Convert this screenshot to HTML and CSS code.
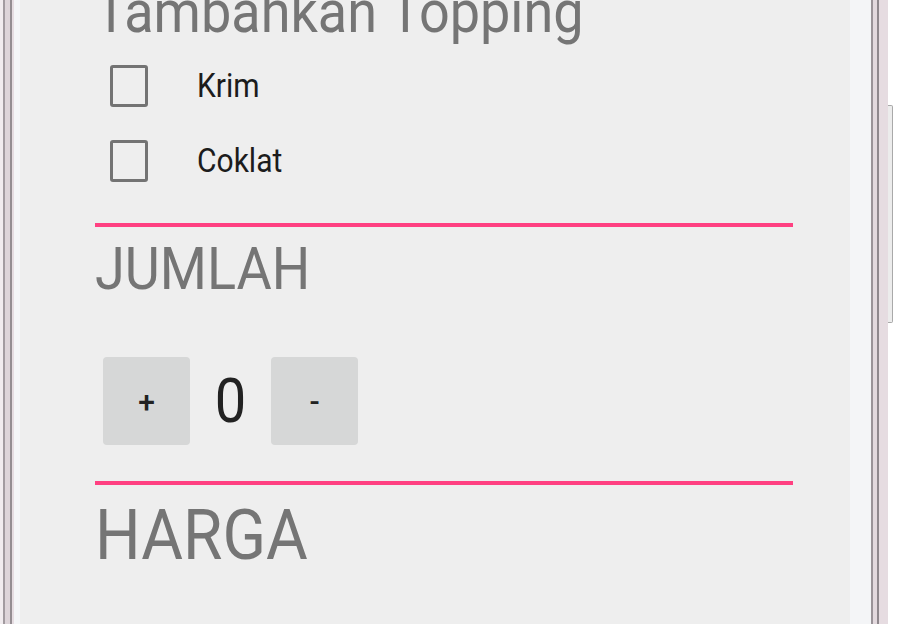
FILE: index.html
```html
<!DOCTYPE html>
<html lang="id">
<head>
  <meta charset="UTF-8">
  <meta name="viewport" content="width=device-width, initial-scale=1.0">
  <title>Pesan Kopi</title>
  <link rel="stylesheet" href="styles.css">
</head>
<body>
  <div class="phone">
    <div class="frame-left"></div>

    <div class="screen">
      <h2 class="section-title">Tambahkan Topping</h2>
      <label class="topping">
        <span class="check"></span>
        <span class="label-text">Krim</span>
      </label>
      <label class="topping">
        <span class="check"></span>
        <span class="label-text">Coklat</span>
      </label>

      <div class="divider"></div>

      <h2 class="section-title caps">JUMLAH</h2>
      <div class="counter">
        <button class="counter-btn">+</button>
        <span class="count">0</span>
        <button class="counter-btn">-</button>
      </div>

      <div class="divider second"></div>

      <h2 class="section-title price">HARGA</h2>
    </div>

    <div class="frame-right"></div>
    <div class="side">
      <div class="side-btn"></div>
    </div>
  </div>
</body>
</html>
```

FILE: styles.css
```css
body {
  font-family: Roboto, "Noto Sans", sans-serif;
  margin: 0;
  padding: 0;
  background-color: #ffffff;
  overflow: hidden;
}
.phone {
  display: flex;
  height: 624px;
}
.frame-left {
  width: 20px;
  background: linear-gradient(to right,
    #f1ecef 0, #f1ecef 3px,
    #a29ba0 3px, #a29ba0 5px,
    #ddd4d9 5px, #ddd4d9 10px,
    #958e93 10px, #958e93 12px,
    #e6dde2 12px, #e6dde2 14px,
    #f5f6f8 14px, #f5f6f8 20px);
}
.frame-right {
  width: 38px;
  background: linear-gradient(to right,
    #f4f5f7 0, #f4f5f7 21px,
    #9a9398 21px, #9a9398 23px,
    #e3d9de 23px, #e3d9de 27px,
    #8f888d 27px, #8f888d 29px,
    #e6dce1 29px, #e6dce1 38px);
}
.side {
  width: 5px;
}
.side-btn {
  margin-top: 105px;
  height: 216px;
  background-color: #ececec;
  border: 1px solid #a9a9a9;
  border-left: none;
  border-radius: 0 2px 2px 0;
}
.screen {
  width: 830px;
  background-color: #eeeeee;
  padding: 0 57px 0 75px;
  box-sizing: border-box;
}
/* the screenshot is a little stretched vertically */
.section-title, .label-text, .count {
  transform: scaleY(1.1);
}
.section-title {
  margin: -20px 0 0;
  font-size: 54px;
  font-weight: 400;
  line-height: 64px;
  color: #757575;
  white-space: nowrap;
}
.section-title.caps {
  margin-top: 10px;
}
.section-title.price {
  margin-top: 13px;
  font-size: 64px;
  line-height: 76px;
}
.topping {
  display: flex;
  align-items: center;
  height: 75px;
  font-size: 30px;
  color: #1c1c1c;
}
.topping:first-of-type {
  margin-top: 4px;
}
.label-text {
  display: inline-block;
}
.check {
  width: 32px;
  height: 36px;
  border: 3px solid #737373;
  border-radius: 3px;
  margin: 0 49px 0 15px;
}
.divider {
  height: 4px;
  margin-top: 25px;
  background-color: #ff4081;
}
.divider.second {
  margin-top: 36px;
}
.counter {
  display: flex;
  align-items: center;
  margin: 56px 0 0 8px;
}
.counter-btn {
  width: 87px;
  height: 88px;
  border: none;
  border-radius: 4px;
  background-color: #d6d7d7;
  font-family: Roboto, sans-serif;
  font-size: 30px;
  font-weight: 500;
  color: #222222;
  padding: 0;
}
.count {
  display: inline-block;
  width: 81px;
  text-align: center;
  font-size: 56px;
  color: #222222;
}
```
